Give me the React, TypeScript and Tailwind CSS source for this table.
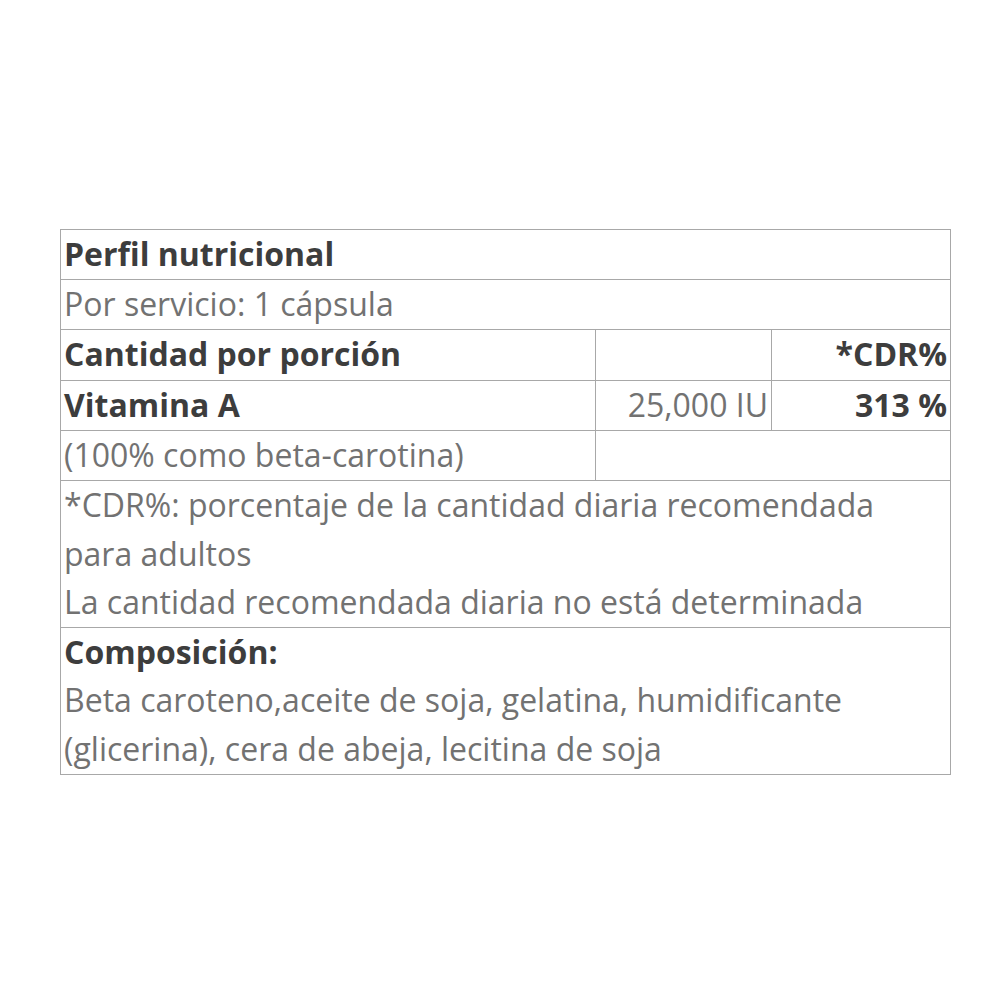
export default function App() {
    const cell = "border border-[#a8a8a8] px-[3px] py-0 align-top"
    const row = cell + " h-[50.2px] align-middle"
    return (
        <div className="min-h-[1000px] w-[1000px] bg-white pt-[229px] pl-[60px]" style={{ fontFamily: '"Open Sans", sans-serif' }}>
            <table className="w-[890px] table-fixed border-collapse text-[32px] leading-[48.6px] text-[#727272]">
                <colgroup>
                    <col className="w-[535px]" />
                    <col className="w-[176px]" />
                    <col className="w-[179px]" />
                </colgroup>
                <tbody>
                    <tr>
                        <td colSpan={3} className={row + " font-bold text-[#3d3d3d]"}>Perfil nutricional</td>
                    </tr>
                    <tr>
                        <td colSpan={3} className={row}>Por servicio: 1 cápsula</td>
                    </tr>
                    <tr>
                        <td className={row + " font-bold text-[#3d3d3d]"}>Cantidad por porción</td>
                        <td className={row}></td>
                        <td className={row + " text-right font-bold text-[#3d3d3d]"}>*CDR%</td>
                    </tr>
                    <tr>
                        <td className={row + " font-bold text-[#3d3d3d]"}>Vitamina A</td>
                        <td className={row + " text-right"}>25,000 IU</td>
                        <td className={row + " text-right font-bold text-[#3d3d3d]"}>313 %</td>
                    </tr>
                    <tr>
                        <td className={row}>(100% como beta-carotina)</td>
                        <td colSpan={2} className={row}></td>
                    </tr>
                    <tr>
                        <td colSpan={3} className={cell}>
                            *CDR%: porcentaje de la cantidad diaria recomendada para adultos
                            <br />
                            La cantidad recomendada diaria no está determinada
                        </td>
                    </tr>
                    <tr>
                        <td colSpan={3} className={cell}>
                            <div className="font-bold text-[#3d3d3d]">Composición:</div>
                            <div>Beta caroteno,aceite de soja, gelatina, humidificante (glicerina), cera de abeja, lecitina de soja</div>
                        </td>
                    </tr>
                </tbody>
            </table>
        </div>
    )
}
